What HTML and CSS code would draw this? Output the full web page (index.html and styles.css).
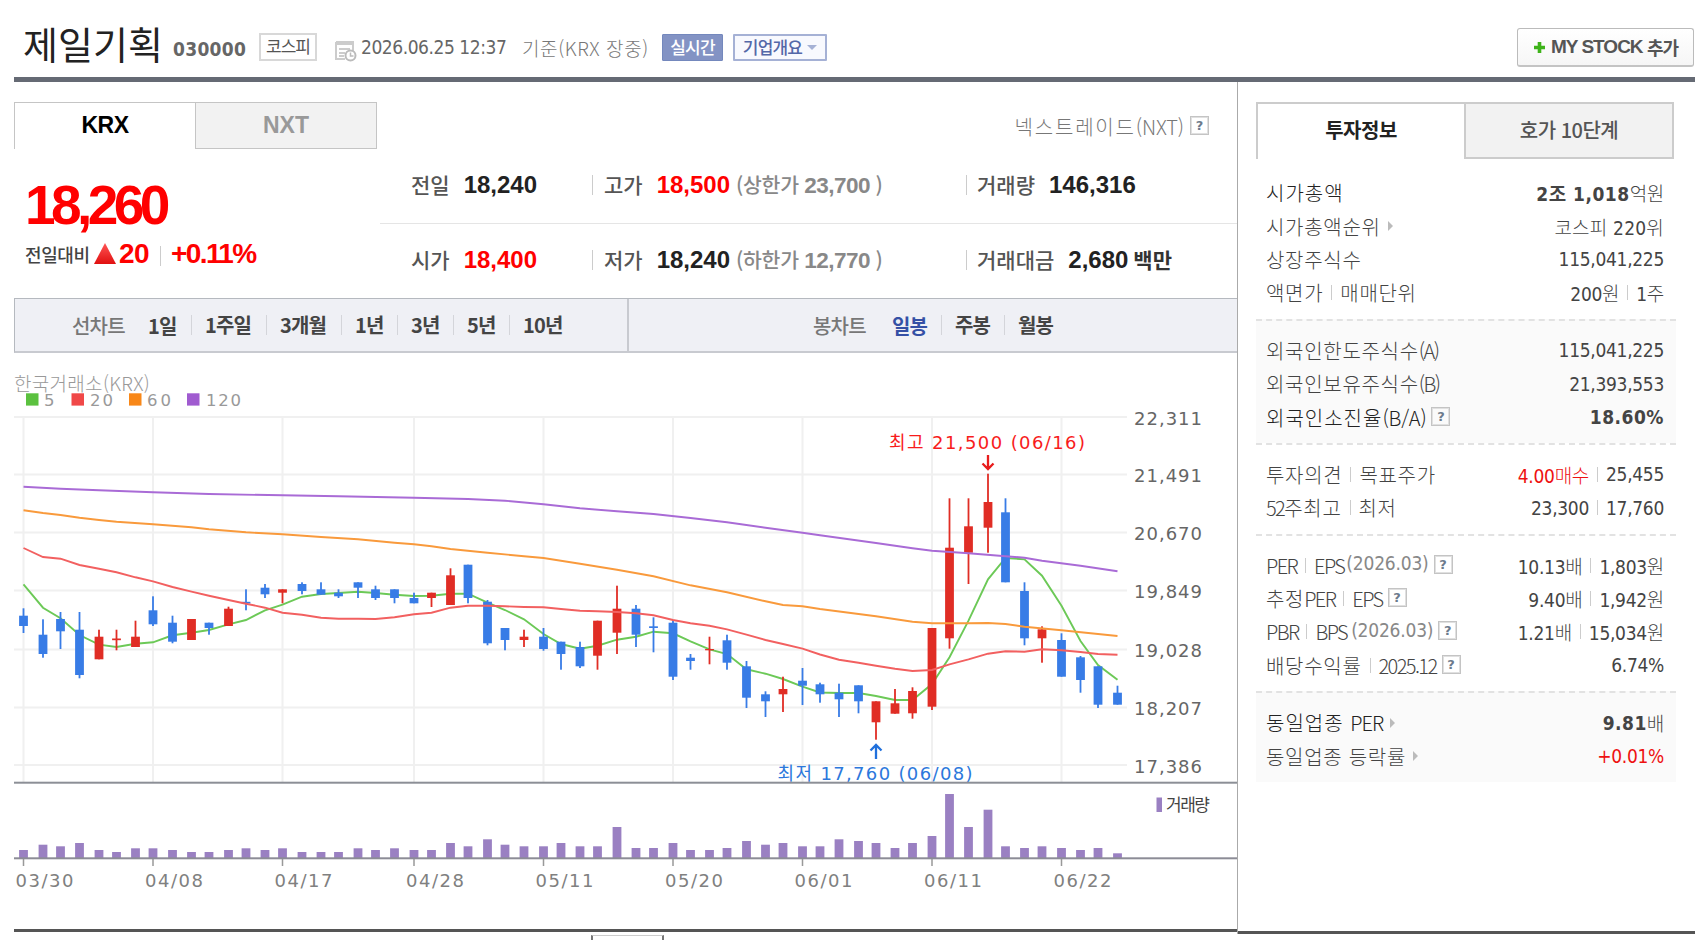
FILE: index.html
```
<!DOCTYPE html>
<html lang="ko">
<head>
    <meta charset="UTF-8">
    <meta name="viewport" content="width=device-width, initial-scale=1.0">
    <title>제일기획 030000</title>
    <link rel="stylesheet" href="styles.css">
</head>
<body>
    <header class="header">
        <h1 class="name">제일기획</h1>
        <b class="code">030000</b>
        <span class="market">코스피</span>
        <svg class="cal" width="22" height="22" viewBox="0 0 22 22">
            <path d="M1 2h17v9M1 2v17h9" fill="none" stroke="#ccc" stroke-width="2"/>
            <path d="M1 4h17M4 9h11M4 13h6M4 16h5" fill="none" stroke="#ccc" stroke-width="2"/>
            <circle cx="15.5" cy="15.5" r="5" fill="#fff" stroke="#bbb" stroke-width="2"/>
            <path d="M15.5 12.5v3.5h3" fill="none" stroke="#bbb" stroke-width="1.5"/>
        </svg>
        <span class="date">2026.06.25 12:37</span>
        <span class="base">기준(KRX 장중)</span>
        <span class="live">실시간</span>
        <span class="outline">기업개요<i></i></span>
        <button class="mystock" type="button"><svg width="11" height="11" viewBox="0 0 11 11"><path d="M5.5 0v11M0 5.5h11" stroke="#3eb31a" stroke-width="3.6"/></svg>MY STOCK <span>추가</span></button>
    </header>

    <div class="content">
        <main class="main">
            <div class="top">
                <div class="tabs">
                    <a class="tab on">KRX</a>
                    <a class="tab">NXT</a>
                </div>
                <div class="nxt"><span>넥스트레이드<q>(NXT)</q></span><i class="help">?</i></div>
            </div>
            <div class="quote">
                <div class="now">
                    <div class="price">18,260</div>
                    <div class="change">
                        <span class="prev">전일대비</span>
                        <svg width="22" height="21" viewBox="0 0 22 21">
                            <linearGradient id="up" x1="0" y1="0" x2="0" y2="1"><stop offset="0" stop-color="#f55"/><stop offset="1" stop-color="#e01010"/></linearGradient>
                            <path d="M11 0L22 21H0z" fill="url(#up)"/>
                        </svg>
                        <b class="diff">20</b>
                        <i class="bar"></i>
                        <b class="rate">+0.11%</b>
                    </div>
                </div>
                <div class="stats">
                    <div class="line">
                        <div class="c1"><span>전일</span><b>18,240</b></div>
                        <div class="c2"><span>고가</span><b class="red">18,500</b><em>(상한가 <u>23,700</u> )</em></div>
                        <div class="c3"><span>거래량</span><b>146,316</b></div>
                    </div>
                    <div class="line">
                        <div class="c1"><span>시가</span><b class="red">18,400</b></div>
                        <div class="c2"><span>저가</span><b>18,240</b><em>(하한가 <u>12,770</u> )</em></div>
                        <div class="c3"><span>거래대금</span><b>2,680</b><span class="unit">백만</span></div>
                    </div>
                </div>
            </div>
            <div class="nav">
                <div class="nav-line">
                    <span class="nav-title">선차트</span>
                    <a class="w1">1일</a><a class="w2">1주일</a><a class="w2">3개월</a><a class="w3">1년</a><a class="w3">3년</a><a class="w3">5년</a><a>10년</a>
                </div>
                <div class="nav-candle">
                    <span class="nav-title">봉차트</span>
                    <a class="w4 sel">일봉</a><a class="w5">주봉</a><a>월봉</a>
                </div>
            </div>
            <div class="chart">
                <div class="exchange">한국거래소(KRX)</div>
                <svg id="chart" width="1223" height="512" viewBox="14 388 1223 512"></svg>
            </div>
            <div class="bottom"><div class="toggle"></div></div>
        </main>

        <aside class="aside">
            <div class="atabs">
                <a class="on">투자정보</a>
                <a>호가 10단계</a>
            </div>
            <section class="first">
                <div class="row strong"><span>시가총액</span><p><b>2조 1,018</b>억원</p></div>
                <div class="row"><span>시가총액순위<i class="arrow"></i></span><p class="rank">코스피 220위</p></div>
                <div class="row"><span>상장주식수</span><p>115,041,225</p></div>
                <div class="row"><span>액면가<i class="bar"></i>매매단위</span><p>200원<i class="bar"></i>1주</p></div>
            </section>
            <section class="gray">
                <div class="row"><span>외국인한도주식수<q>(A)</q></span><p>115,041,225</p></div>
                <div class="row"><span>외국인보유주식수<q>(B)</q></span><p>21,393,553</p></div>
                <div class="row strong"><span>외국인소진율<q class="wide">(B/A)</q><i class="help">?</i></span><p><b>18.60%</b></p></div>
            </section>
            <section>
                <div class="row"><span>투자의견<i class="bar"></i>목표주가</span><p><em>4.00매수</em><i class="bar"></i>25,455</p></div>
                <div class="row"><span><q>52</q>주최고<i class="bar"></i>최저</span><p>23,300<i class="bar"></i>17,760</p></div>
            </section>
            <section>
                <div class="row"><span><q>PER</q><i class="bar"></i><q>EPS</q><small>(2026.03)</small><i class="help">?</i></span><p>10.13배<i class="bar"></i>1,803원</p></div>
                <div class="row"><span>추정<q>PER</q><i class="bar"></i><q>EPS</q><i class="help">?</i></span><p>9.40배<i class="bar"></i>1,942원</p></div>
                <div class="row"><span><q>PBR</q><i class="bar"></i><q>BPS</q><small class="sp">(2026.03)</small><i class="help">?</i></span><p>1.21배<i class="bar"></i>15,034원</p></div>
                <div class="row"><span>배당수익률<i class="bar"></i><q>2025.12</q><i class="help">?</i></span><p>6.74%</p></div>
            </section>
            <section class="gray">
                <div class="row strong"><span>동일업종 <q>PER</q><i class="arrow"></i></span><p><b>9.81</b>배</p></div>
                <div class="row"><span>동일업종 등락률<i class="arrow"></i></span><p><em>+0.01%</em></p></div>
            </section>
        </aside>
    </div>
    <script src="script.js"></script>
</body>
</html>
```
FILE: styles.css
```
* {
    box-sizing: border-box;
}

body {
    margin: 0;
    width: 1695px;
    height: 940px;
    overflow: hidden;
    background: #fff;
    color: #444;
    font: 19px "DejaVu Sans Condensed", "Noto Sans CJK KR", sans-serif;
}

h1, p {
    margin: 0;
}

i, em {
    font-style: normal;
}

u {
    text-decoration: none;
}

q {
    quotes: none;
}

.bar {
    display: inline-block;
    flex: none;
    width: 1px;
    height: 15px;
    background: #ccc;
}

.help {
    display: flex;
    flex: none;
    align-items: center;
    justify-content: center;
    width: 19px;
    height: 19px;
    border: 1px solid #c4c4c4;
    box-shadow: inset 0 0 0 1px #e0e0e0;
    color: #6c7a8c;
    font: bold 13px "DejaVu Sans", sans-serif;
}

/* header */
.header {
    display: flex;
    align-items: center;
    height: 82px;
    margin-left: 14px;
    padding-left: 9px;
    border-bottom: 5px solid #656a74;
    white-space: nowrap;
    padding-top: 17px;
}

.name {
    width: 150px;
    color: #222;
    font: 38px/40px "Noto Sans CJK KR", sans-serif;
    margin-top: -8px;
}

.code {
    width: 86px;
    color: #666;
    letter-spacing: .3px;
    padding-top: 3px;
}

.market {
    width: 58px;
    height: 28px;
    margin-right: 18px;
    border: 2px solid #d8d8d8;
    color: #555;
    font: 17px/21px "Noto Sans CJK KR", sans-serif;
    letter-spacing: -1px;
    text-align: center;
}

.cal {
    margin: 7px 4px 0 0;
}

.date {
    width: 161px;
    color: #666;
    letter-spacing: -.45px;
}

.base {
    width: 140px;
    color: #777;
    font: 300 19px "Noto Sans CJK KR", sans-serif;
    letter-spacing: .6px;
}

.live, .outline {
    height: 27px;
    border: 1px solid #7488bd;
    border-radius: 1px;
    background: #8393c4;
    color: #fff;
    font: 500 17px/23px "Noto Sans CJK KR", sans-serif;
    letter-spacing: -.8px;
    text-align: center;
}

.live {
    width: 61px;
    margin-right: 10px;
}

.outline {
    width: 94px;
    border: 2px solid #a5b1d5;
    background: #f8f9fe;
    color: #5468a8;
    line-height: 21px;
}

.outline i {
    display: inline-block;
    margin: 0 0 4px 5px;
    border: 5px solid transparent;
    border-top-color: #a5b1d5;
    border-bottom: 0;
}

.mystock {
    display: flex;
    align-items: center;
    width: 177px;
    height: 39px;
    margin: 0 1px 0 auto;
    padding: 1px 0 0 16px;
    border: 1px solid #bbb;
    border-bottom: 2px solid #c4c4c4;
    border-radius: 3px;
    background: linear-gradient(#fff, #f6f6f6);
    color: #555;
    font: bold 19px "Liberation Sans", sans-serif;
    letter-spacing: -1px;
    white-space: pre;
}

.mystock svg {
    margin-right: 6px;
}

.mystock span {
    font: bold 18px "Noto Sans CJK KR", sans-serif;
}

/* layout */
.content {
    display: flex;
    height: 858px;
}

.main {
    width: 1238px;
    height: 852px;
    padding-left: 14px;
    border-right: 1px solid #aaa;
}

.top {
    display: flex;
    justify-content: space-between;
    padding: 20px 28px 0 0;
    height: 67px;
}

.tabs {
    display: flex;
}

.tab {
    width: 182px;
    height: 47px;
    border: 1px solid #c5c5c5;
    background: #f2f2f2;
    color: #999;
    font: bold 23px/45px "Liberation Sans", sans-serif;
    text-align: center;
}

.tab.on {
    width: 181px;
    border-right: 0;
    border-bottom: 0;
    background: #fff;
    color: #000;
    letter-spacing: -.5px;
}

.nxt {
    display: flex;
    height: 20px;
    margin-top: 14px;
    gap: 6px;
    color: #777;
    font: 300 20px/22px "Noto Sans CJK KR", sans-serif;
    letter-spacing: 1.8px;
}

.nxt q {
    letter-spacing: -.1px;
}

.nxt .help {
    letter-spacing: 0;
}

/* quote */
.quote {
    display: flex;
    height: 149px;
}

.now {
    width: 366px;
    padding: 27px 0 0 11px;
    color: #f00;
}

.price {
    height: 59px;
    font: bold 55px/58px "Liberation Sans", sans-serif;
    letter-spacing: -4.6px;
}

.change {
    display: flex;
    align-items: center;
    height: 37px;
    font: 28px "Liberation Sans", sans-serif;
}

.prev {
    width: 69px;
    color: #444;
    font: 500 18px "Noto Sans CJK KR", sans-serif;
    letter-spacing: -.4px;
}

.diff {
    width: 36px;
    margin-left: 3px;
    letter-spacing: -.5px;
}

.change .bar {
    height: 20px;
    margin: 4px 10px 0 5px;
}

.rate {
    letter-spacing: -1.6px;
}

.stats {
    flex: 1;
}

.line {
    display: flex;
    align-items: center;
    height: 74px;
    padding-bottom: 3px;
    padding-left: 31px;
    white-space: pre;
    color: #222;
}

.line + .line {
    height: 75px;
    border-top: 1px solid #e5e5e5;
}

.line div {
    display: flex;
    align-items: center;
    height: 20px;
}

.line span {
    color: #555;
    font: 500 21px "Noto Sans CJK KR", sans-serif;
}

.line div > :first-child {
    margin-top: -2px;
}

.line b {
    margin-left: 14px;
    font: bold 24px "Liberation Sans", sans-serif;
}

.line em {
    margin: -2px 0 0 6px;
    color: #888;
    font: 500 20.5px "Noto Sans CJK KR", sans-serif;
    letter-spacing: -.3px;
}

.line em u {
    font: bold 22.5px "Liberation Sans", sans-serif;
    letter-spacing: -.5px;
}

.line .red {
    color: #f00;
}

.c1 {
    width: 181px;
}

.c2 {
    width: 374px;
    padding-left: 11px;
    border-left: 1px solid #ccc;
}

.c3 {
    padding-left: 10px;
    border-left: 1px solid #ccc;
}

.line .unit {
    margin: -2px 0 0 5px;
    color: #333;
    font-weight: bold;
}

/* chart navigation */
.nav {
    display: flex;
    height: 55px;
    border: 1px solid #b5b9bf;
    border-right: 0;
    border-bottom: 2px solid #c8cad0;
    background: #eff0f5;
    white-space: nowrap;
    font: bold 20px "Noto Sans CJK KR", sans-serif;
    letter-spacing: -.8px;
}

.nav > div {
    display: flex;
    align-items: center;
}

.nav-line {
    width: 614px;
    padding-left: 57px;
    border-right: 2px solid #c8cad0;
}

.nav-candle {
    padding-left: 184px;
}

.nav-title {
    width: 76px;
    color: #777;
    font-weight: 500;
}

.nav-candle .nav-title {
    width: 79px;
}

.nav a + a {
    padding-left: 13px;
    border-left: 1px solid #d4d5da;
    height: 20px;
    line-height: 20px;
}

.w1 { width: 43px; }
.w2 { width: 75px; }
.w3 { width: 56px; }
.w4 { width: 49px; }
.w5 { width: 63px; }

.nav .sel {
    color: #3550a5;
}

/* chart */
.chart {
    height: 576px;
    padding-top: 18px;
}

.exchange {
    height: 17px;
    color: #999;
    font: 300 19px/23px "Noto Sans CJK KR", sans-serif;
    letter-spacing: .3px;
}

.chart svg {
    display: block;
}

.bottom {
    height: 11px;
    border-top: 3px solid #555;
}

.toggle {
    width: 73px;
    height: 5px;
    margin: 3px 0 0 577px;
    border: 2px solid #777;
    border-top: 1px solid #ccc;
    border-bottom: 0;
}

/* investment info */
.aside {
    flex: 1;
    height: 852px;
    padding: 20px 19px 0 18px;
    border-bottom: 3px solid #555;
}

.atabs {
    display: flex;
    width: 418px;
    height: 57px;
}

.atabs a {
    width: 210px;
    border: 2px solid #ccc;
    background: #f2f2f2;
    color: #555;
    font: 500 20px/51px "Noto Sans CJK KR", sans-serif;
    letter-spacing: -.5px;
    text-align: center;
}

.atabs .on {
    width: 208px;
    border-width: 2px 0 0 2px;
    background: #fff;
    color: #222;
    font-weight: bold;
}

section {
    width: 420px;
    padding: 13px 12px 9px 10px;
    border-top: 2px dashed #e2e2e2;
}

section.first {
    padding-top: 17px;
    border-top: 0;
}

.gray {
    background: #fafafa;
}

.row {
    display: flex;
    align-items: center;
    justify-content: space-between;
    height: 33.4px;
    white-space: pre;
}

.row span {
    display: flex;
    align-items: center;
    font: 300 20px "Noto Sans CJK KR", sans-serif;
    letter-spacing: .7px;
}

.row p {
    display: flex;
    align-items: center;
    font-weight: 300;
    letter-spacing: -.3px;
}

.row .rank {
    letter-spacing: .2px;
}

.row b {
    font-weight: bold;
    letter-spacing: .5px;
}

.row.strong span {
    color: #222;
    letter-spacing: 1px;
}

.row.strong q {
    letter-spacing: -1px;
}

.row q {
    letter-spacing: -1.6px;
}

.row.strong .wide {
    letter-spacing: -.2px;
}

.row small {
    margin: -4px 0 0 2px;
    color: #888;
    font: 19px "DejaVu Sans Condensed", sans-serif;
    letter-spacing: -.2px;
}

.row .sp {
    margin-left: 4px;
}

.row em {
    color: #e11;
}

.row .bar {
    margin: 0 8px;
}

.row.strong .help, .row .help {
    margin: -2px 0 0 5px;
    color: #6c7a8c;
    letter-spacing: 0;
    font: bold 13px "DejaVu Sans", sans-serif;
}

.arrow {
    margin-left: 7px;
    border: 5px solid transparent;
    border-left-color: #bbb;
    border-right: 0;
}
```
FILE: script.js
```
// x position of every trading day
const days = [23.5, 43, 60.5, 79.5, 99, 116.5, 135.5, 153, 172.5, 191.5, 209, 228.5, 246, 265, 282.5, 302, 321, 338.5, 358, 375.5,
  394.5, 414, 431.5, 450.5, 468, 487.5, 505, 524, 543.5, 561, 580, 597.5, 617, 636, 653.5, 673, 690.5, 709.5, 727, 746.5,
  765.5, 783, 802.5, 820, 839, 858.5, 876, 895, 912.5, 932, 949.5, 968.5, 988, 1005.5, 1024.5, 1042, 1061.5, 1080.5, 1098, 1117.5];

// high, body top, body bottom, low, up
const candles = [
  [608.3, 615.7, 626, 633, 0], [619.3, 634.7, 654, 657.7, 0], [612, 619, 631.3, 649, 0], [612, 629.7, 675, 678.3, 0],
  [629.7, 636.7, 659.3, 659.3, 1], [629.7, 638.5, 640.2, 650.3, 1], [620.7, 636.7, 647, 647, 1], [596.3, 610.3, 624.3, 626, 0],
  [615.7, 622.7, 641.7, 643.3, 0], [619, 619, 640, 640, 1], [622.7, 622.7, 628, 634.7, 0], [606.7, 608.7, 626, 626, 1],
  [589.3, 601.8, 603.5, 610.3, 0], [584, 587.7, 594.3, 598, 0], [589.3, 589.3, 592.7, 603.3, 1], [582.3, 584, 591, 594.3, 0],
  [582.3, 589.3, 594.7, 594.7, 0], [589.3, 592.7, 596.3, 598, 0], [582.3, 582.3, 587.7, 598, 0], [585.7, 589.3, 598, 600, 0],
  [589.3, 589.3, 598, 603.3, 0], [592.7, 598, 603.3, 603.3, 0], [592.7, 592.7, 598, 607, 1], [568.3, 575.3, 605, 605, 1],
  [564.7, 564.7, 598, 603.3, 0], [600, 601.7, 643.3, 645.3, 0], [628, 628, 640, 650.3, 0], [629.7, 636.7, 640, 647, 1],
  [628, 636.7, 649, 650.7, 0], [641.7, 641.7, 654, 669.7, 0], [641.7, 647, 666.3, 668, 0], [620.7, 620.7, 655.7, 669.7, 1],
  [585.7, 608.7, 632.7, 654, 1], [605, 608.7, 634.7, 647, 0], [617.3, 626.3, 628, 652.3, 0], [620, 622.7, 676.7, 680, 0],
  [654, 657.7, 661, 669.7, 0], [636.7, 649, 650.3, 664.3, 1], [634.7, 640.3, 662.7, 669.7, 0], [661, 666.3, 697.7, 708, 0],
  [691.3, 694.3, 701.3, 717, 0], [676.7, 689, 694.3, 712, 1], [668, 680.7, 685.7, 705, 0], [682.7, 684.3, 694.3, 702.7, 0],
  [683.7, 692.7, 699.3, 717, 0], [685.3, 685.3, 701.3, 713.3, 0], [701.3, 701.3, 722.3, 739.7, 1], [689, 703.3, 713.7, 713.7, 1],
  [687.3, 691, 713.3, 718.7, 1], [628, 628, 706.7, 710, 1], [498.3, 547.7, 638.3, 648.7, 1], [498.3, 526.3, 552.7, 584, 1],
  [473.7, 502, 527.7, 552.7, 1], [498.3, 512.3, 582.3, 582.3, 0], [582.3, 591, 638.3, 645.3, 0], [626.3, 629.3, 638.3, 662.7, 1],
  [633.3, 640, 676.7, 676.7, 0], [656, 657.3, 680, 692.7, 0], [666.3, 666.3, 704.7, 708, 0], [685.7, 692.7, 704.7, 704.7, 0]
];

const volumes = [8, 13.3, 11.7, 15, 8, 6, 9.7, 9.7, 8, 6, 6, 8, 9.7, 8, 9.7, 6, 6, 6, 9.7, 8, 9.7, 8, 8, 15, 11.7, 18.7, 13.3, 11.7, 11.7, 15,
  11.7, 11.7, 31, 10, 10, 15, 8, 8, 10, 17, 13.3, 15, 11.7, 11.7, 18.7, 17, 15, 10, 15, 22, 64, 31, 48.3, 11.7, 10, 11.7, 10, 8, 10, 4.7];

// moving averages, [day index, y]
const ma5 = [584.3, 607.7, 618.3, 635, 644.7, 647, 643.7, 642.3, 635.3, 632.7, 630, 624.3, 620, 610.3, 604.7, 596.7, 594, 593, 591.7, 593,
  594.7, 596, 595.7, 593.7, 593.7, 602.7, 610, 619.3, 634, 644, 648.7, 645.7, 639.7, 636.7, 631.7, 633.3, 641.3, 649.3, 654, 669.3,
  673.7, 679, 686.7, 692.5, 693, 693, 696, 700, 700, 684, 657.3, 620.7, 579.3, 558, 559.3, 575.7, 605.7, 641, 665, 679.7].map((y, i) => [i, y]);
const ma20 = [548, 557, 558.7, 565, 568.7, 572.3, 577.3, 581.3, 587, 591.7, 595.7, 600, 603.7, 607.7, 612.7, 614.7, 617.7, 618.7, 618.7, 619,
  617.3, 614.3, 612.7, 607.7, 605.7, 605.7, 606.3, 607, 607.3, 609, 610.7, 611.3, 612, 613.3, 615.3, 620, 623.3, 625.7, 629.3, 634.7,
  640, 644, 648.7, 654.5, 659.7, 662.7, 665.7, 668.7, 671, 670, 664.3, 659.3, 653.7, 651.3, 651.7, 649.3, 650.3, 652, 654, 654.7].map((y, i) => [i, y]);
const ma60 = [[0, 510.3], [1, 513], [2, 515], [3, 517.7], [4, 520], [5, 521.7], [7, 524.3], [9, 527.3], [10, 529.3], [12, 532.3], [14, 534.3],
  [16, 537], [18, 539.3], [20, 542.7], [21, 544.3], [22, 546.3], [23, 549], [25, 552.7], [27, 556.3], [28, 558], [30, 563.7], [32, 569.7],
  [34, 576.3], [36, 585.3], [38, 592.3], [40, 601.3], [41, 605], [42, 606.3], [43, 609], [46, 616.3], [48, 621.7], [49, 623.3], [51, 623.3],
  [52, 623], [53, 624], [54, 626.7], [56, 630.3], [58, 634], [59, 636]];
const ma120 = [[0, 486.7], [2, 488.7], [4, 490.3], [7, 492.3], [10, 494], [14, 495.3], [17, 496.3], [21, 497.7], [24, 499], [26, 500.7],
  [28, 504.3], [30, 508.3], [32, 511.3], [34, 514], [36, 518], [38, 522.3], [40, 527.7], [42, 532.7], [43, 535.3], [46, 543], [48, 548.3],
  [49, 550.7], [51, 553.3], [54, 557.7], [55, 560.7], [57, 565.7], [59, 571.3]];

const prices = [[417, "22,311"], [474.5, "21,491"], [532.5, "20,670"], [590.5, "19,849"], [649.5, "19,028"], [707.5, "18,207"], [765, "17,386"]];
const dates = ["03/30", "04/08", "04/17", "04/28", "05/11", "05/20", "06/01", "06/11", "06/22"];
const legend = [[26, 44, 11, "5", "#5bc13f"], [71.5, 90, 23, "20", "#f04848"], [129, 147, 24, "60", "#f88718"], [187, 206, 35, "120", "#a05bd0"]];

let svg = "";
const rect = (x, y, w, h, c) => { svg += `<rect x="${x}" y="${y}" width="${w}" height="${h}" fill="${c}"/>`; };
const text = (x, y, w, t, c, size) => {
  svg += `<text x="${x}" y="${y}" textLength="${w}" fill="${c}" font-size="${size}" font-family="DejaVu Sans, Noto Sans CJK KR, sans-serif" xml:space="preserve">${t}</text>`;
};
const average = (points, color) => {
  svg += `<polyline points="${points.map(p => days[p[0]] + "," + p[1]).join(" ")}" fill="none" stroke="${color}" stroke-width="1.9"/>`;
};

// grid
prices.forEach(([y, label]) => {
  rect(14, y - 1, 1113, 2, "#f0f0f0");
  text(1134, y + 7.7, 68, label, "#666", 18);
});
dates.forEach((label, i) => {
  const x = days[i * 7];
  rect(x - 1, 417, 2, 365, "#f0f0f0");
  rect(x - 0.75, 859, 1.5, 7, "#999");
  text(x - 8, 887, 58, label, "#808080", 18);
});

legend.forEach(([x, tx, w, label, color]) => {
  rect(x, 393.3, 12.5, 12.3, color);
  text(tx, 405.5, w, label, "#999", 16.5);
});

average(ma5, "#6cc957");
candles.forEach(([high, top, bottom, low, up], i) => {
  const color = up ? "#e02d25" : "#387ce6";
  rect(days[i] - 0.9, high, 1.8, low - high, color);
  rect(days[i] - 4.4, top, 8.8, bottom - top, color);
});
average(ma20, "#f26060");
average(ma60, "#f99a3c");
average(ma120, "#a96bd6");

// high and low marks
text(889, 449, 196, "최고 21,500 (06/16)", "#f81c1c", 18);
svg += '<path d="M988 455v14M982.5 463.5l5.5 5.5 5.5-5.5" fill="none" stroke="#e81c1c" stroke-width="2.3"/>';
text(777.5, 780, 195, "최저 17,760 (06/08)", "#2c78dc", 18);
svg += '<path d="M876 759v-14M870.5 750.5l5.5-5.5 5.5 5.5" fill="none" stroke="#2070dc" stroke-width="2.3"/>';

// volume
rect(14, 781.7, 1223, 2, "#8c8f96");
volumes.forEach((v, i) => rect(days[i] - 4.4, 858 - v, 8.8, v, "#9a80c2"));
rect(14, 857.3, 1223, 2, "#8c8c96");
rect(1156.5, 797.5, 5.5, 14.5, "#9a80c2");
text(1166, 811, 44, "거래량", "#444", 17);

document.getElementById("chart").innerHTML = svg;
```
